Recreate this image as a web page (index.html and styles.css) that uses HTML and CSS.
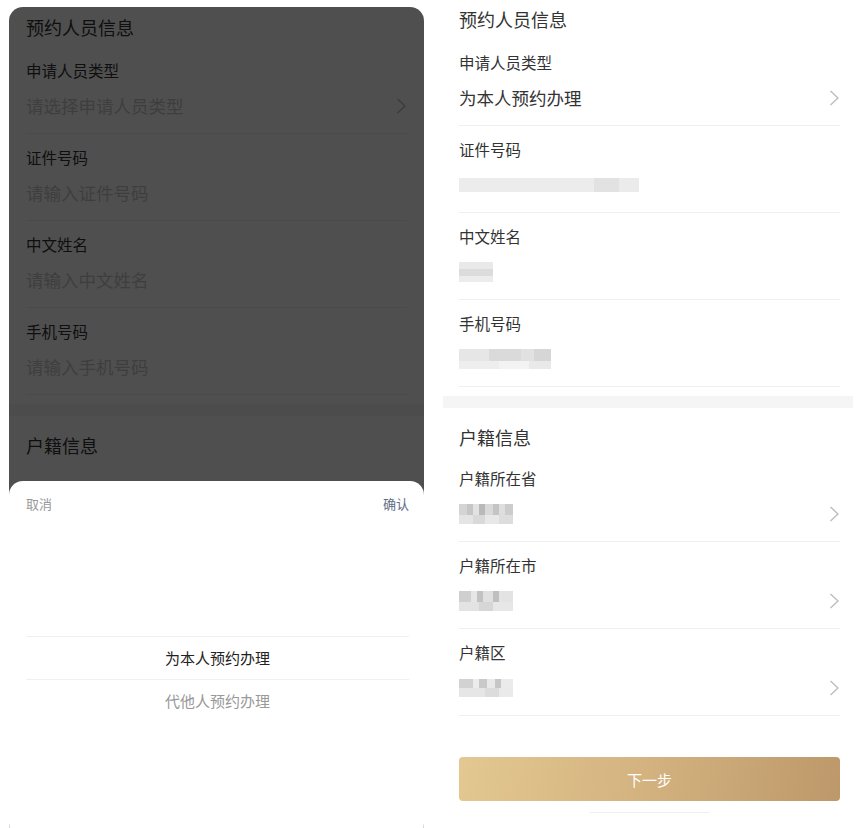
FILE: index.html
```html
<!DOCTYPE html>
<html lang="zh-CN">
<head>
  <meta charset="UTF-8">
  <title>预约人员信息</title>
  <link rel="stylesheet" href="styles.css">
</head>
<body>
  <div class="screen">
    <!-- Left: form with the type picker open -->
    <div class="phone phone--dimmed">
      <section class="group group--first">
        <h2 class="group-title">预约人员信息</h2>
        <div class="field">
          <div class="field-label">申请人员类型</div>
          <div class="field-value">
            <span class="placeholder">请选择申请人员类型</span>
            <svg class="chevron" viewBox="0 0 10 16"><path d="M1.5 1 L9 8 L1.5 15"/></svg>
          </div>
        </div>
        <div class="field">
          <div class="field-label">证件号码</div>
          <div class="field-value"><span class="placeholder">请输入证件号码</span></div>
        </div>
        <div class="field">
          <div class="field-label">中文姓名</div>
          <div class="field-value"><span class="placeholder">请输入中文姓名</span></div>
        </div>
        <div class="field">
          <div class="field-label">手机号码</div>
          <div class="field-value"><span class="placeholder">请输入手机号码</span></div>
        </div>
      </section>
      <div class="band"></div>
      <section class="group">
        <h2 class="group-title">户籍信息</h2>
      </section>

      <div class="mask"></div>

      <div class="sheet">
        <div class="sheet-head">
          <span class="sheet-cancel">取消</span>
          <span class="sheet-confirm">确认</span>
        </div>
        <div class="picker">
          <div class="picker-item picker-item--active">为本人预约办理</div>
          <div class="picker-item">代他人预约办理</div>
        </div>
      </div>
    </div>

    <!-- Right: filled form -->
    <div class="phone phone--form">
      <section class="group group--first">
        <h2 class="group-title">预约人员信息</h2>
        <div class="field">
          <div class="field-label">申请人员类型</div>
          <div class="field-value">
            <span>为本人预约办理</span>
            <svg class="chevron" viewBox="0 0 10 16"><path d="M1.5 1 L9 8 L1.5 15"/></svg>
          </div>
        </div>
        <div class="field">
          <div class="field-label">证件号码</div>
          <div class="field-value"><span class="blur blur-id"></span></div>
        </div>
        <div class="field">
          <div class="field-label">中文姓名</div>
          <div class="field-value"><span class="blur blur-name"></span></div>
        </div>
        <div class="field">
          <div class="field-label">手机号码</div>
          <div class="field-value"><span class="blur blur-phone"></span></div>
        </div>
      </section>
      <div class="band"></div>
      <section class="group">
        <h2 class="group-title">户籍信息</h2>
        <div class="field">
          <div class="field-label">户籍所在省</div>
          <div class="field-value">
            <span class="blur mosaic"></span>
            <svg class="chevron" viewBox="0 0 10 16"><path d="M1.5 1 L9 8 L1.5 15"/></svg>
          </div>
        </div>
        <div class="field">
          <div class="field-label">户籍所在市</div>
          <div class="field-value">
            <span class="blur mosaic mosaic--city"></span>
            <svg class="chevron" viewBox="0 0 10 16"><path d="M1.5 1 L9 8 L1.5 15"/></svg>
          </div>
        </div>
        <div class="field">
          <div class="field-label">户籍区</div>
          <div class="field-value">
            <span class="blur mosaic mosaic--district"></span>
            <svg class="chevron" viewBox="0 0 10 16"><path d="M1.5 1 L9 8 L1.5 15"/></svg>
          </div>
        </div>
      </section>
      <div class="actions">
        <button type="button" class="next-btn">下一步</button>
        <div class="home-bar"></div>
      </div>
    </div>
  </div>
</body>
</html>
```

FILE: styles.css
```css
* { box-sizing: border-box; }
body {
  margin: 0;
  height: 828px;
  overflow: hidden;
  background: #fff;
  color: #333;
  font-family: "Noto Sans CJK SC", "Noto Sans", sans-serif;
}
.screen { display: flex; align-items: flex-start; }

.phone { position: relative; background: #fff; }
.phone--dimmed {
  width: 415px; height: 830px;
  margin: 7px 0 0 9px;
  border-radius: 14px; overflow: hidden;
}
.phone--form { width: 410px; margin: -1px 0 0 19px; }

/* form groups */
.group { padding: 0 17px; }
.phone--form .group { padding-left: 16px; padding-right: 13px; }
.group--first { padding-bottom: 9px; }
.group-title {
  margin: 0; padding: 16px 0 5px;
  font-size: 18px; font-weight: 400; line-height: 26px; color: #333;
}
.group--first .group-title { padding: 7px 0; }

.field { padding: 12px 0 15px; border-bottom: 1px solid #efefef; }
.field-label { font-size: 15.5px; line-height: 22px; color: #333; }
.field-value {
  margin-top: 13px; height: 24px;
  display: flex; align-items: center; justify-content: space-between;
  font-size: 17.5px; line-height: 24px; color: #333;
}
.placeholder { color: #c8c8c8; }
.chevron { width: 10px; height: 16px; flex: none; margin-right: 1px; }
.chevron path { fill: none; stroke: #bdbdbd; stroke-width: 1.4; }

.band { height: 12px; background: #f5f5f5; }

/* redacted values */
.blur { display: inline-block; filter: blur(.7px); }
.blur-id {
  width: 180px; height: 14px;
  background: linear-gradient(90deg, #ececec 0 135px, #e2e2e2 135px 160px, #ebebeb 160px);
}
.blur-name {
  width: 34px; height: 20px;
  background: linear-gradient(180deg, #e9e9e9 0 7px, #dcdcdc 7px 14px, #ececec 14px);
}
.blur-phone {
  width: 92px; height: 20px;
  background:
    linear-gradient(90deg, #e6e6e6 0 30px, #dadada 30px 62px, #e1e1e1 62px 75px, #d6d6d6 75px) top / 100% 60% no-repeat,
    linear-gradient(90deg, #eeeeee 0 40px, #f3f3f3 40px 70px, #e9e9e9 70px) bottom / 100% 40% no-repeat;
}
.mosaic {
  width: 54px; height: 20px;
  background:
    linear-gradient(90deg, #d4d4d4 0 8px, #c6c6c6 8px 14px, #e2e2e2 14px 20px, #b9b9b9 20px 26px, #d9d9d9 26px 34px, #c4c4c4 34px 40px, #dedede 40px 46px, #cccccc 46px) top / 100% 55% no-repeat,
    linear-gradient(90deg, #e4e4e4 0 14px, #d9d9d9 14px 26px, #e8e8e8 26px 40px, #dddddd 40px) bottom / 100% 45% no-repeat;
}
.mosaic--city {
  background:
    linear-gradient(90deg, #cfcfcf 0 12px, #e6e6e6 12px 18px, #c2c2c2 18px 24px, #e0e0e0 24px 34px, #bfbfbf 34px 40px, #e3e3e3 40px) top / 100% 55% no-repeat,
    linear-gradient(90deg, #e3e3e3 0 20px, #d6d6d6 20px 34px, #e7e7e7 34px) bottom / 100% 45% no-repeat;
}
.mosaic--district {
  height: 18px;
  background:
    linear-gradient(90deg, #d2d2d2 0 14px, #ececec 14px 20px, #c9c9c9 20px 28px, #e9e9e9 28px 36px, #c6c6c6 36px 42px, #ebebeb 42px) top / 100% 50% no-repeat,
    linear-gradient(90deg, #e6e6e6 0 26px, #dcdcdc 26px 40px, #eaeaea 40px) bottom / 100% 50% no-repeat;
}

/* next button */
.actions { padding: 41px 13px 0 16px; }
.next-btn {
  display: block; width: 100%; height: 44px;
  border: none; border-radius: 4px;
  background: linear-gradient(100deg, #e3c891 0%, #d3b27f 50%, #bd986a 100%);
  color: #fff; font: inherit; font-size: 15px;
}
.home-bar { width: 120px; height: 1px; margin: 11px auto 0; background: #f0f0f0; }

/* picker overlay */
.mask { position: absolute; inset: 0; background: rgba(0, 0, 0, .69); }
.sheet {
  position: absolute; left: 0; right: 0; top: 474px; bottom: 0;
  background: #fff;
  border-radius: 14px 14px 0 0;
  padding: 0 15px 0 17px;
}
.sheet-head {
  display: flex; justify-content: space-between;
  padding: 14px 0; font-size: 13px; line-height: 18px;
}
.sheet-cancel { color: #999; }
.sheet-confirm { color: #5e6d83; }
.picker { margin-top: 109px; }
.picker-item {
  height: 44px; line-height: 42px; text-align: center;
  font-size: 15px; color: #999;
}
.picker-item--active {
  color: #222;
  border-top: 1px solid #f0f0f0; border-bottom: 1px solid #f0f0f0;
}
```
